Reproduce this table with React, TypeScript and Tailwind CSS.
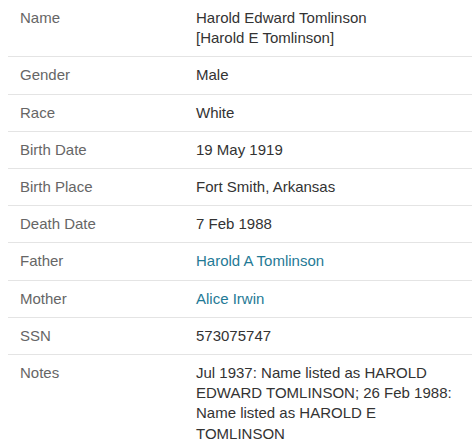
const rows: { label: string; value: React.ReactNode; link?: boolean }[] = [
  {
    label: 'Name',
    value: (
      <>
        Harold Edward Tomlinson
        <br />
        [Harold E Tomlinson]
      </>
    ),
  },
  { label: 'Gender', value: 'Male' },
  { label: 'Race', value: 'White' },
  { label: 'Birth Date', value: '19 May 1919' },
  { label: 'Birth Place', value: 'Fort Smith, Arkansas' },
  { label: 'Death Date', value: '7 Feb 1988' },
  { label: 'Father', value: 'Harold A Tomlinson', link: true },
  { label: 'Mother', value: 'Alice Irwin', link: true },
  { label: 'SSN', value: '573075747' },
  {
    label: 'Notes',
    value:
      'Jul 1937: Name listed as HAROLD EDWARD TOMLINSON; 26 Feb 1988: Name listed as HAROLD E TOMLINSON',
  },
];

const App = () => {
  return (
    <div className="bg-white w-[475px] h-[443px] overflow-hidden font-['Liberation_Sans',Arial,sans-serif] text-[15px] leading-[20.2px]">
      <table className="ml-2 w-[464px] border-collapse">
        <tbody>
          {rows.map((row, index) => (
            <tr
              key={index}
              className={index < rows.length - 1 ? 'border-b border-[#e4e4e4]' : ''}
            >
              <td className="w-[188px] pl-3 py-2 align-top text-[#666666]">{row.label}</td>
              <td className="pr-3 py-2 align-top">
                {row.link ? (
                  <a href="#" className="text-[#1f7a96]">
                    {row.value}
                  </a>
                ) : (
                  <span className="text-[#333333]">{row.value}</span>
                )}
              </td>
            </tr>
          ))}
        </tbody>
      </table>
    </div>
  );
};

export default App;
